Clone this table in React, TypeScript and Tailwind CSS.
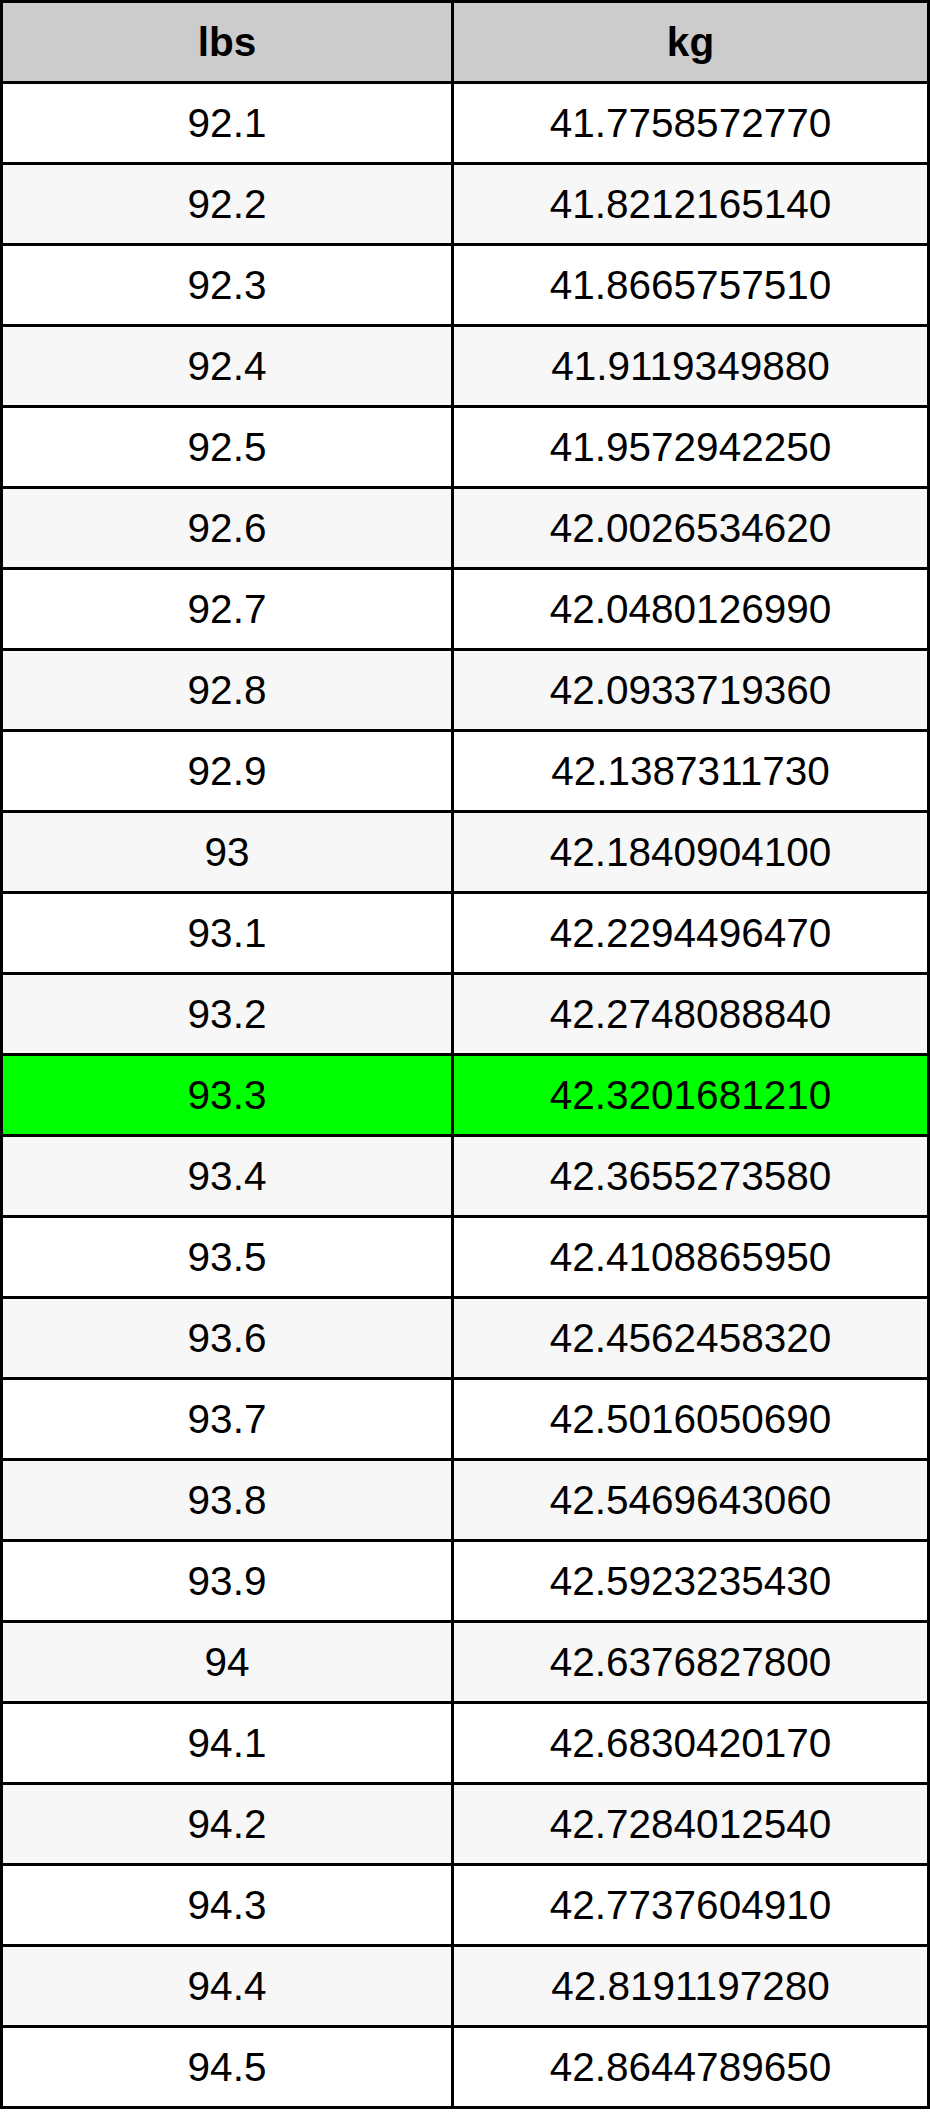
import React from "react";

const rows: [string, string][] = [
  ["92.1", "41.7758572770"],
  ["92.2", "41.8212165140"],
  ["92.3", "41.8665757510"],
  ["92.4", "41.9119349880"],
  ["92.5", "41.9572942250"],
  ["92.6", "42.0026534620"],
  ["92.7", "42.0480126990"],
  ["92.8", "42.0933719360"],
  ["92.9", "42.1387311730"],
  ["93", "42.1840904100"],
  ["93.1", "42.2294496470"],
  ["93.2", "42.2748088840"],
  ["93.3", "42.3201681210"],
  ["93.4", "42.3655273580"],
  ["93.5", "42.4108865950"],
  ["93.6", "42.4562458320"],
  ["93.7", "42.5016050690"],
  ["93.8", "42.5469643060"],
  ["93.9", "42.5923235430"],
  ["94", "42.6376827800"],
  ["94.1", "42.6830420170"],
  ["94.2", "42.7284012540"],
  ["94.3", "42.7737604910"],
  ["94.4", "42.8191197280"],
  ["94.5", "42.8644789650"],
];

export default function App() {
  return (
    <div className="w-[930px] bg-white" style={{ fontFamily: '"Liberation Sans", Arial, Helvetica, sans-serif' }}>
      <div className="grid grid-cols-[451px_476px] border-l-[3px] border-t-[3px] border-black text-black text-[40.5px] leading-none">
        <div className="h-[81px] flex items-center justify-center border-r-[3px] border-b-[3px] border-black bg-[#cccccc] font-bold">
          lbs
        </div>
        <div className="h-[81px] flex items-center justify-center border-r-[3px] border-b-[3px] border-black bg-[#cccccc] font-bold">
          kg
        </div>
        {rows.map(([a, b], i) => {
          const bg = a === "93.3" ? "bg-[#00ff00]" : i % 2 === 1 ? "bg-[#f7f7f7]" : "bg-white";
          return (
            <React.Fragment key={a}>
              <div className={`h-[81px] flex items-center justify-center border-r-[3px] border-b-[3px] border-black ${bg}`}>
                {a}
              </div>
              <div className={`h-[81px] flex items-center justify-center border-r-[3px] border-b-[3px] border-black ${bg}`}>
                {b}
              </div>
            </React.Fragment>
          );
        })}
      </div>
    </div>
  );
}
